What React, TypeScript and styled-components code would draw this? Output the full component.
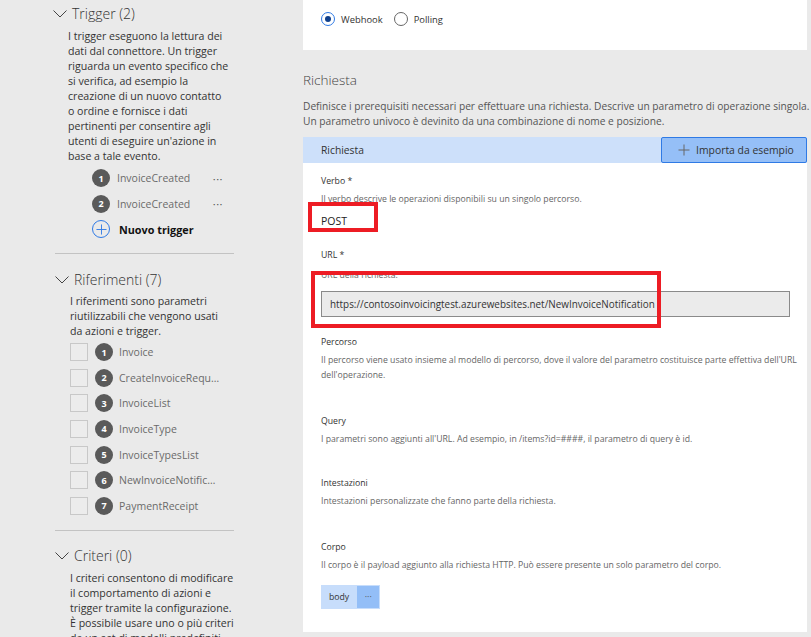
import React from 'react';
import styled, { createGlobalStyle } from 'styled-components';

const GlobalStyle = createGlobalStyle`
  html, body { margin: 0; padding: 0; background: #eaeaea; }
  body { font-family: 'Open Sans', 'Noto Sans', sans-serif; color: #333; }
  *, *::before, *::after { box-sizing: border-box; }
`;

const Page = styled.div`
  display: flex;
  width: 811px;
  height: 637px;
  overflow: hidden;
  background: #eaeaea;
`;

/* ---------- Sidebar ---------- */
const Sidebar = styled.aside`
  width: 303px;
  flex: none;
  padding: 3px 0 0 55px;
`;

const NavSection = styled.section<{ $shift?: number }>`
  margin-left: ${p => p.$shift ?? 0}px;
`;

const NavHeader = styled.div`
  display: flex;
  align-items: center;
  gap: 5px;
  height: 22px;
`;

const NavTitle = styled.h2`
  margin: 0;
  font-size: 14px;
  font-weight: 300;
  line-height: 22px;
  color: #333;
`;

const NavDesc = styled.p`
  margin: 3.5px 0 0 15px;
  font-size: 10.6px;
  line-height: 15px;
  color: #333;
  white-space: pre;
`;

const TriggerList = styled.ul`
  list-style: none;
  margin: 2px 0 0 39px;
  padding: 0;
  width: 131px;
`;

const TriggerRow = styled.li`
  display: flex;
  align-items: center;
  height: 25.5px;
  gap: 7px;
`;

const Badge = styled.span`
  flex: none;
  width: 18px;
  height: 18px;
  border-radius: 50%;
  background: #5a5a5a;
  color: #fff;
  font-size: 9px;
  font-weight: 700;
  display: flex;
  align-items: center;
  justify-content: center;
`;

const ItemText = styled.span`
  flex: 1;
  min-width: 0;
  font-size: 10.5px;
  color: #6b6b6b;
  white-space: nowrap;
  overflow: hidden;
  text-overflow: ellipsis;
`;

const MoreDots = styled.span`
  font-size: 11px;
  color: #555;
  letter-spacing: 0.5px;
`;

const AddCircle = styled.span`
  flex: none;
  width: 18px;
  height: 18px;
  border-radius: 50%;
  border: 1px solid #2f7ae5;
  display: flex;
  align-items: center;
  justify-content: center;
`;

const AddLabel = styled.span`
  font-size: 10.8px;
  font-weight: 700;
  color: #111;
  margin-left: 2px;
`;

const Divider = styled.hr`
  width: 179px;
  height: 1px;
  border: 0;
  background: #c3c3c3;
  margin: 11px 0 14.7px;
`;

const RefList = styled.ul`
  list-style: none;
  margin: 0 0 0 15px;
  padding: 0;
`;

const RefRow = styled.li`
  display: flex;
  align-items: center;
  height: 25.65px;
  gap: 7px;
  width: 150px;
`;

const CheckBox = styled.span`
  flex: none;
  width: 18px;
  height: 18px;
  border: 1px solid #c8c8c8;
  background: #ececec;
`;

const RefText = styled(ItemText)`
  margin-left: -1px;
  max-width: 101px;
`;

/* ---------- Main ---------- */
const Main = styled.main`
  width: 504px;
  flex: none;
  display: flex;
  flex-direction: column;
`;

const TopCard = styled.section`
  background: #fff;
  height: 50px;
  padding: 12px 18px 0;
  display: flex;
  align-items: flex-start;
  gap: 11px;
`;

const RadioOption = styled.label`
  display: flex;
  align-items: center;
  gap: 6px;
  height: 14px;
  font-size: 9.4px;
  color: #333;
`;

const RadioRing = styled.span<{ $checked?: boolean }>`
  flex: none;
  width: 14px;
  height: 14px;
  border-radius: 50%;
  border: 1.5px solid ${p => (p.$checked ? '#2f7ae5' : '#666')};
  display: flex;
  align-items: center;
  justify-content: center;
  &::after {
    content: '';
    display: ${p => (p.$checked ? 'block' : 'none')};
    width: 6px;
    height: 6px;
    border-radius: 50%;
    background: #0f3f8c;
  }
`;

const Intro = styled.div`
  margin-top: 20px;
`;

const MainTitle = styled.h1`
  margin: 0;
  font-size: 13.5px;
  font-weight: 300;
  line-height: 20px;
  color: #444;
`;

const MainDesc = styled.p`
  margin: 9px 0 0;
  font-size: 10.2px;
  line-height: 15px;
  color: #555;
  white-space: pre;
`;

const Card = styled.section`
  margin-top: 7.5px;
  background: #fff;
  height: 495px;
`;

const CardHeader = styled.div`
  display: flex;
  align-items: center;
  justify-content: space-between;
  height: 26px;
  background: #cde0fa;
  padding-left: 18px;
`;

const CardHeaderTitle = styled.span`
  font-size: 10.3px;
  color: #333;
`;

const ImportButton = styled.button`
  display: flex;
  align-items: center;
  gap: 6px;
  width: 146px;
  height: 26px;
  padding: 0 0 0 16px;
  background: #95bff7;
  border: 1px solid #2f7ae5;
  border-radius: 2px;
  font-family: inherit;
  font-size: 10.4px;
  color: #333;
  cursor: pointer;
`;

const CardBody = styled.div`
  padding: 10.5px 18px 23px;
`;

const Field = styled.div<{ $top?: number }>`
  margin-top: ${p => p.$top ?? 0}px;
`;

const FieldLabel = styled.div`
  font-size: 8.7px;
  line-height: 17px;
  color: #333;
`;

const FieldDesc = styled.p<{ $gap?: number }>`
  margin: ${p => p.$gap ?? 2}px 0 0;
  font-size: 8.7px;
  line-height: 15px;
  color: #666;
  white-space: pre;
`;

const Highlighted = styled.div<{ $box: [number, number, number, number]; $gap?: number }>`
  position: relative;
  margin-top: ${p => p.$gap ?? 0}px;
  &::after {
    content: '';
    box-sizing: border-box;
    position: absolute;
    left: ${p => p.$box[0]}px;
    top: ${p => p.$box[1]}px;
    width: ${p => p.$box[2]}px;
    height: ${p => p.$box[3]}px;
    border: 4px solid #ed1c24;
    pointer-events: none;
  }
`;

const VerbValue = styled.div`
  font-size: 10.5px;
  line-height: 18px;
  color: #222;
`;

const UrlInput = styled.div`
  margin-top: 7.5px;
  width: 469px;
  height: 26px;
  background: #ebebeb;
  border: 1px solid #8a8a8a;
  padding-left: 8px;
  display: flex;
  align-items: center;
  font-size: 9.9px;
  color: #333;
  white-space: nowrap;
`;

const Chip = styled.div`
  margin-top: 11.5px;
  display: inline-flex;
  height: 24px;
  padding: 1px;
  background: #c7ddfb;
`;

const ChipLabel = styled.span`
  display: flex;
  align-items: center;
  padding: 0 8px 0 7px;
  font-size: 8.7px;
  color: #333;
`;

const ChipMore = styled.span`
  width: 22px;
  display: flex;
  align-items: center;
  justify-content: center;
  background: #93bef7;
  font-size: 9px;
  color: #555;
`;

const Chevron = () => (
  <svg width="14" height="8" viewBox="0 0 14 8" style={{ flex: 'none' }}>
    <polyline points="0.5,0.5 7,7 13.5,0.5" fill="none" stroke="#444" strokeWidth="1" />
  </svg>
);

const PlusIcon = ({ color, size }: { color: string; size: number }) => (
  <svg width={size} height={size} viewBox="0 0 12 12">
    <path d="M6 0.5V11.5M0.5 6H11.5" stroke={color} strokeWidth="1" fill="none" />
  </svg>
);

const triggers = ['InvoiceCreated', 'InvoiceCreated'];
const refs = [
  'Invoice',
  'CreateInvoiceRequest',
  'InvoiceList',
  'InvoiceType',
  'InvoiceTypesList',
  'NewInvoiceNotification',
  'PaymentReceipt',
];

export default function App() {
  return (
    <>
      <GlobalStyle />
      <Page>
        <Sidebar>
          <NavSection $shift={-2}>
            <NavHeader>
              <Chevron />
              <NavTitle>Trigger (2)</NavTitle>
            </NavHeader>
            <NavDesc>
              {`I trigger eseguono la lettura dei
dati dal connettore. Un trigger
riguarda un evento specifico che
si verifica, ad esempio la
creazione di un nuovo contatto
o ordine e fornisce i dati
pertinenti per consentire agli
utenti di eseguire un'azione in
base a tale evento.`}
            </NavDesc>
            <TriggerList>
              {triggers.map((t, i) => (
                <TriggerRow key={i}>
                  <Badge>{i + 1}</Badge>
                  <ItemText>{t}</ItemText>
                  <MoreDots>···</MoreDots>
                </TriggerRow>
              ))}
              <TriggerRow>
                <AddCircle>
                  <PlusIcon color="#2f7ae5" size={11} />
                </AddCircle>
                <AddLabel>Nuovo trigger</AddLabel>
              </TriggerRow>
            </TriggerList>
          </NavSection>
          <Divider />
          <NavSection>
            <NavHeader>
              <Chevron />
              <NavTitle>Riferimenti (7)</NavTitle>
            </NavHeader>
            <NavDesc>
              {`I riferimenti sono parametri
riutilizzabili che vengono usati
da azioni e trigger.`}
            </NavDesc>
            <RefList>
              {refs.map((r, i) => (
                <RefRow key={r}>
                  <CheckBox />
                  <Badge>{i + 1}</Badge>
                  <RefText>{r}</RefText>
                </RefRow>
              ))}
            </RefList>
          </NavSection>
          <Divider />
          <NavSection>
            <NavHeader>
              <Chevron />
              <NavTitle>Criteri (0)</NavTitle>
            </NavHeader>
            <NavDesc>
              {`I criteri consentono di modificare
il comportamento di azioni e
trigger tramite la configurazione.
È possibile usare uno o più criteri
da un set di modelli predefiniti.`}
            </NavDesc>
          </NavSection>
        </Sidebar>

        <Main>
          <TopCard>
            <RadioOption>
              <RadioRing $checked />
              Webhook
            </RadioOption>
            <RadioOption>
              <RadioRing />
              Polling
            </RadioOption>
          </TopCard>

          <Intro>
            <MainTitle>Richiesta</MainTitle>
            <MainDesc>
              {`Definisce i prerequisiti necessari per effettuare una richiesta. Descrive un parametro di operazione singola.
Un parametro univoco è devinito da una combinazione di nome e posizione.`}
            </MainDesc>
          </Intro>

          <Card>
            <CardHeader>
              <CardHeaderTitle>Richiesta</CardHeaderTitle>
              <ImportButton type="button">
                <PlusIcon color="#666" size={12} />
                Importa da esempio
              </ImportButton>
            </CardHeader>
            <CardBody>
              <Field>
                <FieldLabel>Verbo *</FieldLabel>
                <FieldDesc>Il verbo descrive le operazioni disponibili su un singolo percorso.</FieldDesc>
                <Highlighted $gap={4.5} $box={[-13, -10, 70, 30]}>
                  <VerbValue>POST</VerbValue>
                </Highlighted>
              </Field>

              <Field $top={17.5}>
                <FieldLabel>URL *</FieldLabel>
                <Highlighted $gap={4} $box={[-10, 2.5, 350, 57]}>
                  <FieldDesc $gap={0}>URL della richiesta.</FieldDesc>
                  <UrlInput>https://contosoinvoicingtest.azurewebsites.net/NewInvoiceNotification</UrlInput>
                </Highlighted>
              </Field>

              <Field $top={17.5}>
                <FieldLabel>Percorso</FieldLabel>
                <FieldDesc>
                  {`Il percorso viene usato insieme al modello di percorso, dove il valore del parametro costituisce parte effettiva dell'URL
dell'operazione.`}
                </FieldDesc>
              </Field>

              <Field $top={30}>
                <FieldLabel>Query</FieldLabel>
                <FieldDesc>I parametri sono aggiunti all'URL. Ad esempio, in /items?id=####, il parametro di query è id.</FieldDesc>
              </Field>

              <Field $top={28}>
                <FieldLabel>Intestazioni</FieldLabel>
                <FieldDesc>Intestazioni personalizzate che fanno parte della richiesta.</FieldDesc>
              </Field>

              <Field $top={30}>
                <FieldLabel>Corpo</FieldLabel>
                <FieldDesc>Il corpo è il payload aggiunto alla richiesta HTTP. Può essere presente un solo parametro del corpo.</FieldDesc>
                <Chip>
                  <ChipLabel>body</ChipLabel>
                  <ChipMore>···</ChipMore>
                </Chip>
              </Field>
            </CardBody>
          </Card>
        </Main>
      </Page>
    </>
  );
}
